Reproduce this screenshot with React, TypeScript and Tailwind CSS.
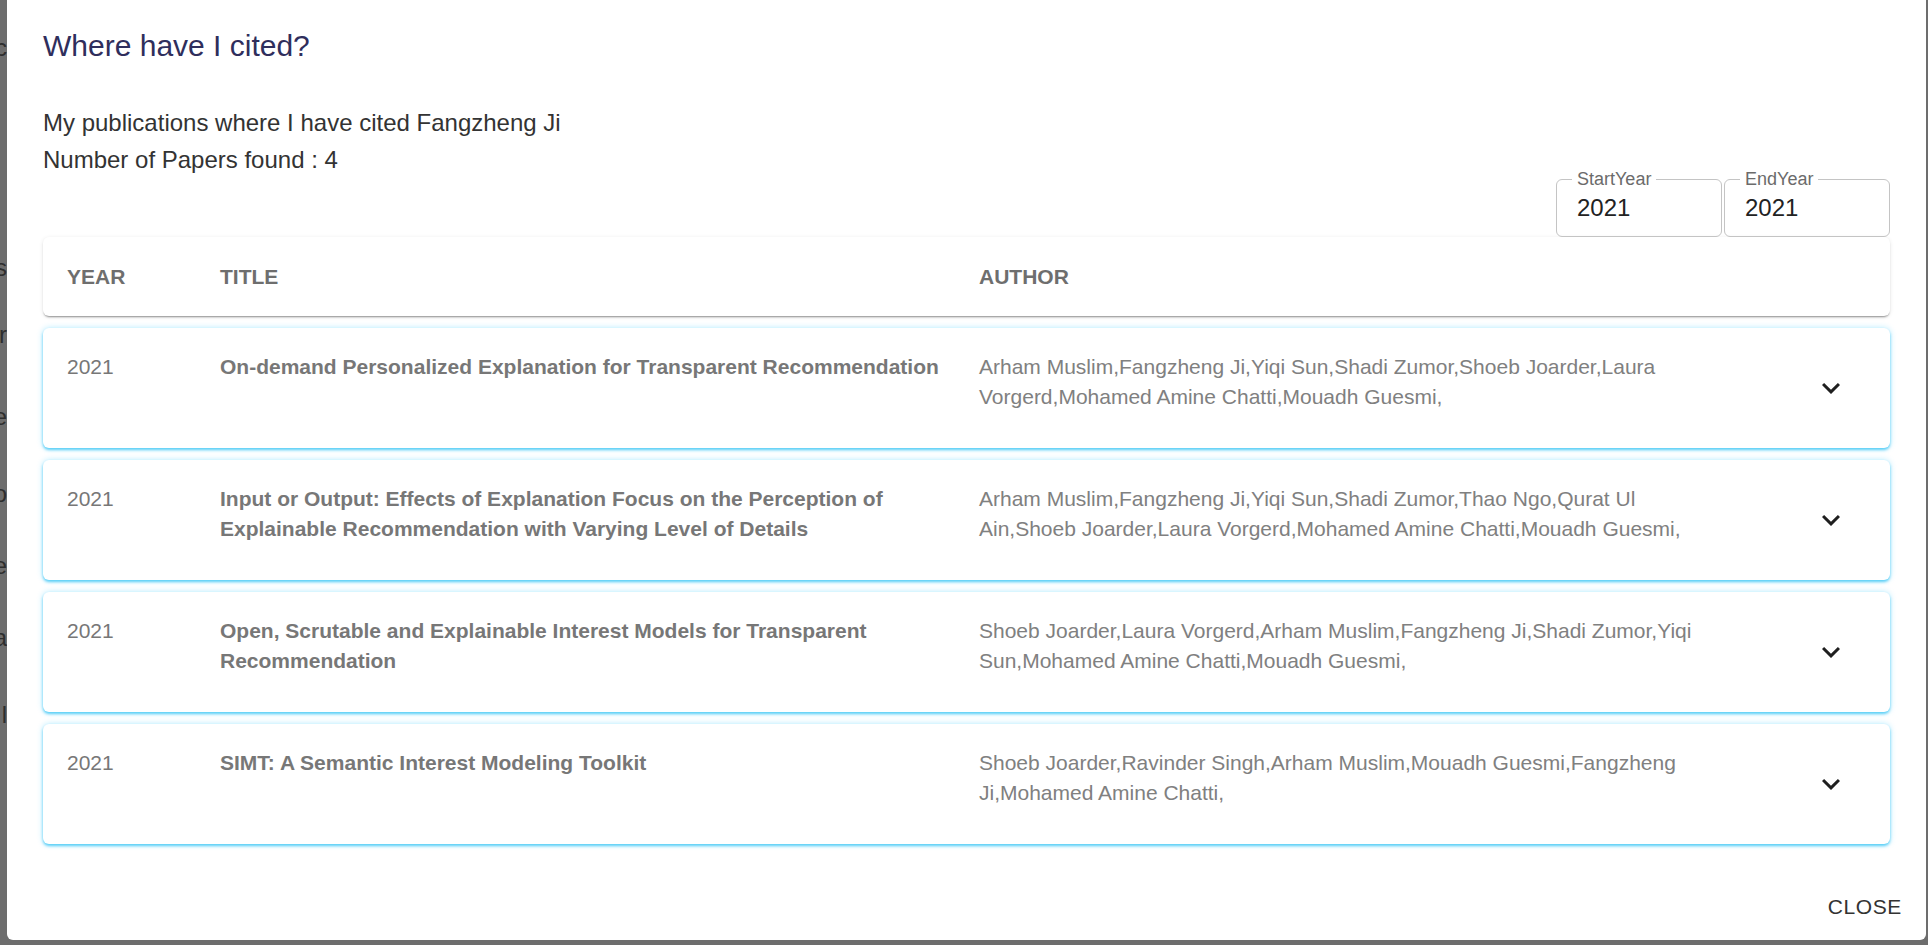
import React from "react";

type Paper = {
  year: string;
  title: string;
  authors: string;
};

const papers: Paper[] = [
  {
    year: "2021",
    title: "On-demand Personalized Explanation for Transparent Recommendation",
    authors:
      "Arham Muslim,Fangzheng Ji,Yiqi Sun,Shadi Zumor,Shoeb Joarder,Laura Vorgerd,Mohamed Amine Chatti,Mouadh Guesmi,",
  },
  {
    year: "2021",
    title:
      "Input or Output: Effects of Explanation Focus on the Perception of Explainable Recommendation with Varying Level of Details",
    authors:
      "Arham Muslim,Fangzheng Ji,Yiqi Sun,Shadi Zumor,Thao Ngo,Qurat Ul Ain,Shoeb Joarder,Laura Vorgerd,Mohamed Amine Chatti,Mouadh Guesmi,",
  },
  {
    year: "2021",
    title: "Open, Scrutable and Explainable Interest Models for Transparent Recommendation",
    authors:
      "Shoeb Joarder,Laura Vorgerd,Arham Muslim,Fangzheng Ji,Shadi Zumor,Yiqi Sun,Mohamed Amine Chatti,Mouadh Guesmi,",
  },
  {
    year: "2021",
    title: "SIMT: A Semantic Interest Modeling Toolkit",
    authors:
      "Shoeb Joarder,Ravinder Singh,Arham Muslim,Mouadh Guesmi,Fangzheng Ji,Mohamed Amine Chatti,",
  },
];

// bits of the page that peek out from behind the dialog
const behind = [
  { text: "ic", mt: "mt-[33px]" },
  { text: "ts", mt: "mt-[190px]" },
  { text: "r", mt: "mt-[37px]" },
  { text: "e", mt: "mt-[52px]" },
  { text: "o", mt: "mt-[47px]" },
  { text: "e", mt: "mt-[42px]" },
  { text: "a", mt: "mt-[42px]" },
  { text: "l", mt: "mt-[47px]" },
];

function ExpandIcon() {
  return (
    <svg viewBox="0 0 24 24" className="h-[36px] w-[36px] fill-[#1f1f1f]">
      <path d="M16.59 8.59 12 13.17 7.41 8.59 6 10l6 6 6-6z" />
    </svg>
  );
}

function YearField({ label, value }: { label: string; value: string }) {
  return (
    <div className="relative flex h-[58px] w-[166px] items-center rounded-[6px] border border-[#c4c4c4] pl-[20px]">
      <span className="absolute left-[15px] top-[-11px] bg-white px-[5px] text-[18px] leading-[20px] text-[#6b6b6b]">
        {label}
      </span>
      <span className="text-[24px] leading-[30px] text-[#222]">{value}</span>
    </div>
  );
}

function App() {
  return (
    <div className="relative h-[945px] w-full overflow-hidden bg-[#6d6d6d] font-['Liberation_Sans',Arial,sans-serif]">
      <div className="flex w-[7px] flex-col items-end overflow-hidden">
        {behind.map((b, i) => (
          <span
            key={i}
            className={`${b.mt} whitespace-nowrap text-[24px] leading-[30px] text-[#2e2e2e]`}
          >
            {b.text}
          </span>
        ))}
      </div>

      <div className="absolute left-[7px] top-0 flex h-[940px] w-[1919px] flex-col rounded-b-[6px] bg-white">
        <h2 className="px-[36px] pt-[22px] text-[30px] leading-[48px] text-[#2f2e5c]">
          Where have I cited?
        </h2>

        <div className="mt-[34px] flex flex-col px-[36px]">
          <p className="text-[24px] leading-[37px] text-[#333]">
            My publications where I have cited Fangzheng Ji
          </p>
          <p className="text-[24px] leading-[37px] text-[#333]">
            Number of Papers found : 4
          </p>

          <div className="mt-[1px] flex justify-end gap-[2px]">
            <YearField label="StartYear" value="2021" />
            <YearField label="EndYear" value="2021" />
          </div>

          <div className="grid h-[79px] grid-cols-[153px_783px_750px_1fr] items-center rounded-[6px] bg-white text-[21px] font-bold uppercase text-[#6e6e6e] shadow-[0_2px_2px_-1px_rgba(0,0,0,0.4),0_1px_4px_0_rgba(0,0,0,0.1)]">
            <div className="pl-[24px]">Year</div>
            <div className="pl-[24px]">Title</div>
            <div>Author</div>
            <div />
          </div>

          <div className="flex flex-col gap-[12px] pt-[12px]">
            {papers.map((p, i) => (
              <div
                key={i}
                className="grid h-[120px] grid-cols-[153px_783px_750px_1fr] rounded-[6px] bg-white text-[21px] leading-[30px] shadow-[0_2px_3px_0_rgba(0,180,240,0.6),0_0_6px_0_rgba(0,190,255,0.3)]"
              >
                <div className="pl-[24px] pt-[24px] text-[#777]">{p.year}</div>
                <div className="pl-[24px] pr-[14px] pt-[24px] font-bold text-[#777]">
                  {p.title}
                </div>
                <div className="pt-[24px] text-[#808080]">{p.authors}</div>
                <div className="flex items-center pl-[84px]">
                  <ExpandIcon />
                </div>
              </div>
            ))}
          </div>
        </div>

        <div className="mt-[45px] flex justify-end pr-[12px]">
          <button className="px-[12px] text-[21px] uppercase leading-[36px] tracking-[0.03em] text-[#333]">
            Close
          </button>
        </div>
      </div>
    </div>
  );
}

export default App;
